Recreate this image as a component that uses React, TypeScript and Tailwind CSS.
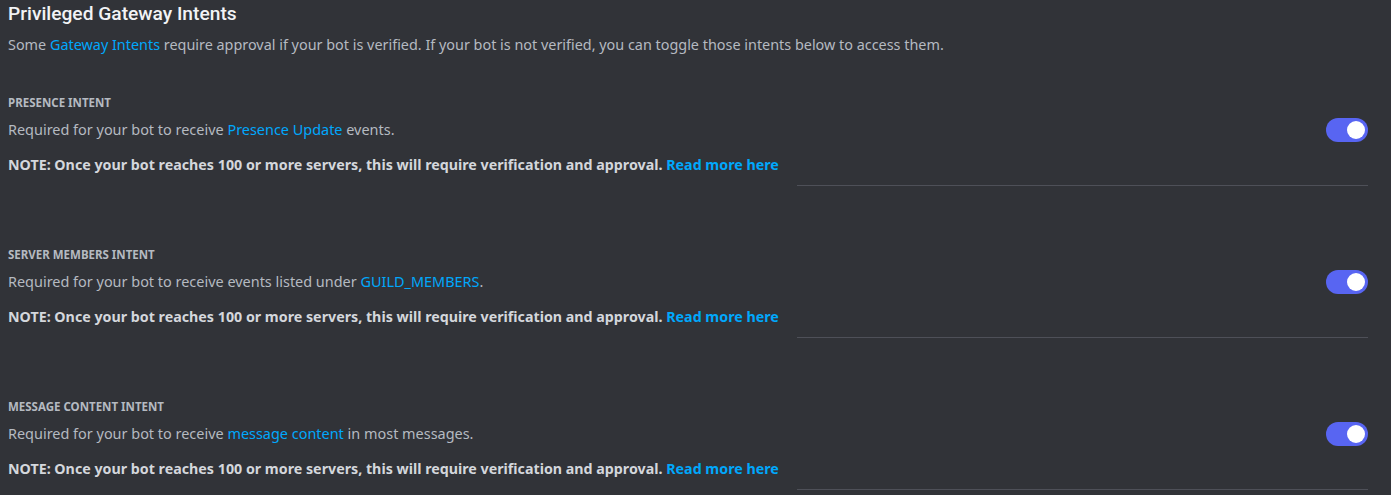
import React from "react";

const font = { fontFamily: '"Noto Sans", "Open Sans", sans-serif' };
const titleFont = { fontFamily: 'Roboto, "Noto Sans", sans-serif' };

function Toggle() {
  return (
    <div className="flex h-[24px] w-[42px] items-center justify-end rounded-full bg-[#5865f2] pr-[3px]">
      <div className="h-[18px] w-[18px] rounded-full bg-white" />
    </div>
  );
}

function Intent({ title, desc }: { title: string; desc: React.ReactNode }) {
  return (
    <div className="flex flex-col">
      <div className="text-[11.5px] font-bold leading-[16px] text-[#b5bac1]">{title}</div>
      <div className="mt-[7px] flex items-center justify-between pr-[23px]">
        <div className="text-[14.45px] leading-[20px] text-[#b5bac1]">{desc}</div>
        <Toggle />
      </div>
      <div className="mt-[13px] text-[14.26px] font-bold leading-[20px] text-[#d4d7dc]">
        NOTE: Once your bot reaches 100 or more servers, this will require verification and approval.{" "}
        <span className="text-[#00a8fc]">Read more here</span>
      </div>
      <div className="mt-[10px] flex justify-end pr-[23px]">
        <div className="h-px w-[571px] bg-[#4e5058]" />
      </div>
    </div>
  );
}

export default function App() {
  return (
    <div className="h-[495px] w-[1391px] overflow-hidden bg-[#313338] pl-[8px]" style={font}>
      <div className="pt-[1px] text-[19.2px] font-medium leading-[26px] text-[#f2f3f5]" style={titleFont}>
        Privileged Gateway Intents
      </div>
      <div className="mt-[8px] text-[14.4px] leading-[20px] text-[#b5bac1]">
        Some <span className="text-[#00a8fc]">Gateway Intents</span> require approval if your bot is verified. If your bot is not verified, you can toggle those intents below to access them.
      </div>
      <div className="mt-[40px] flex flex-col gap-[61px]">
        <Intent
          title="PRESENCE INTENT"
          desc={<>Required for your bot to receive <span className="text-[#00a8fc]">Presence Update</span> events.</>}
        />
        <Intent
          title="SERVER MEMBERS INTENT"
          desc={<>Required for your bot to receive events listed under <span className="text-[#00a8fc]">GUILD_MEMBERS</span>.</>}
        />
        <Intent
          title="MESSAGE CONTENT INTENT"
          desc={<>Required for your bot to receive <span className="text-[#00a8fc]">message content</span> in most messages.</>}
        />
      </div>
    </div>
  );
}
